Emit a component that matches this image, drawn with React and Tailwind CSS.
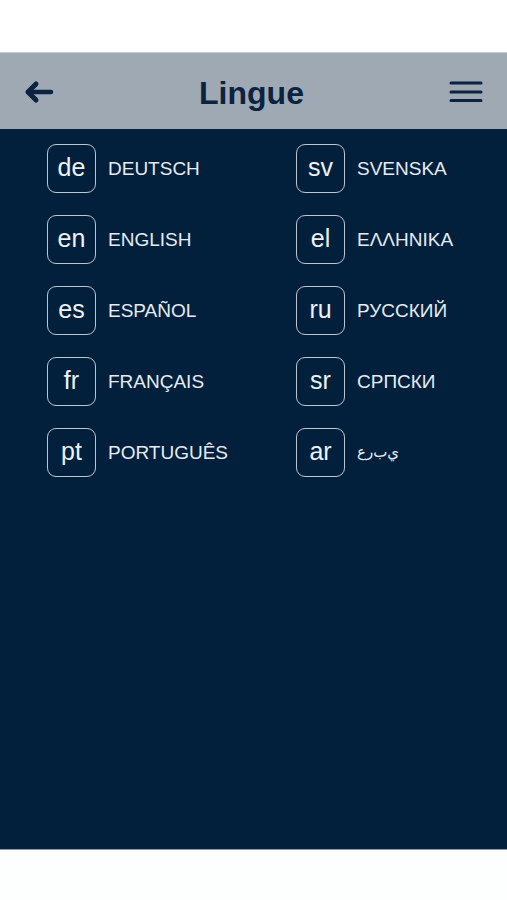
import React from "react";

const left = [
  ["de", "DEUTSCH"],
  ["en", "ENGLISH"],
  ["es", "ESPAÑOL"],
  ["fr", "FRANÇAIS"],
  ["pt", "PORTUGUÊS"],
];
const right = [
  ["sv", "SVENSKA"],
  ["el", "ΕΛΛΗΝΙΚΑ"],
  ["ru", "РУССКИЙ"],
  ["sr", "СРПСКИ"],
  ["ar", "\uFEC9\uFEAD\uFE8F\uFEF1"],
];

function Row({ code, label }) {
  const isAr = code === "ar";
  return (
    <div className="flex h-[49px] items-center">
      <div className="flex h-[49px] w-[49px] shrink-0 items-center justify-center rounded-[9px] border border-[#bcc6d1] pb-[2px] text-[25px] leading-none text-[#eef2f6]">
        {code}
      </div>
      {isAr ? (
        <span
          className="ml-[12px] text-[15px] leading-none text-[#e6ecf2] [direction:ltr] [unicode-bidi:bidi-override]"
          style={{ fontFamily: '"DejaVu Sans", sans-serif' }}
        >
          {label}
        </span>
      ) : (
        <span className="ml-[12px] text-[19px] leading-none tracking-[0px] text-[#e6ecf2]">
          {label}
        </span>
      )}
    </div>
  );
}

export default function App() {
  return (
    <div
      className="flex h-[900px] w-[507px] flex-col bg-white"
      style={{ fontFamily: '"Liberation Sans", Arial, sans-serif' }}
    >
      <div className="h-[52px] shrink-0 bg-white" />
      <div className="flex h-[77px] shrink-0 items-center justify-between border-t border-[#c4cad1] bg-[#9ea9b4] pl-[24px] pr-[24px]">
        <svg width="30" height="24" viewBox="0 0 30 24" className="mt-[1px]">
          <path d="M4 12 H27" stroke="#0b2240" strokeWidth="4.5" strokeLinecap="round" fill="none" />
          <path d="M12 4 L4 12 L12 20" stroke="#0b2240" strokeWidth="5" strokeLinecap="round" strokeLinejoin="round" fill="none" />
        </svg>
        <div className="mt-[4px] text-[32px] font-bold leading-none text-[#0b2240]">Lingue</div>
        <svg width="34" height="24" viewBox="0 0 34 24" className="mt-[1px]">
          <path d="M2 3 H32 M2 12 H32 M2 20.5 H32" stroke="#0b2240" strokeWidth="3" strokeLinecap="round" fill="none" />
        </svg>
      </div>
      <div className="h-[720px] shrink-0 bg-[#02203b] pl-[47px] pt-[15px]">
        <div className="grid grid-cols-[249px_1fr]">
          <div className="flex flex-col gap-[22px]">
            {left.map(([c, l]) => (
              <Row key={c} code={c} label={l} />
            ))}
          </div>
          <div className="flex flex-col gap-[22px]">
            {right.map(([c, l]) => (
              <Row key={c} code={c} label={l} />
            ))}
          </div>
        </div>
      </div>
      <div className="h-[1px] shrink-0 bg-[#8e95ad]" />
      <div className="flex-1 bg-[#fdfefe]" />
    </div>
  );
}
